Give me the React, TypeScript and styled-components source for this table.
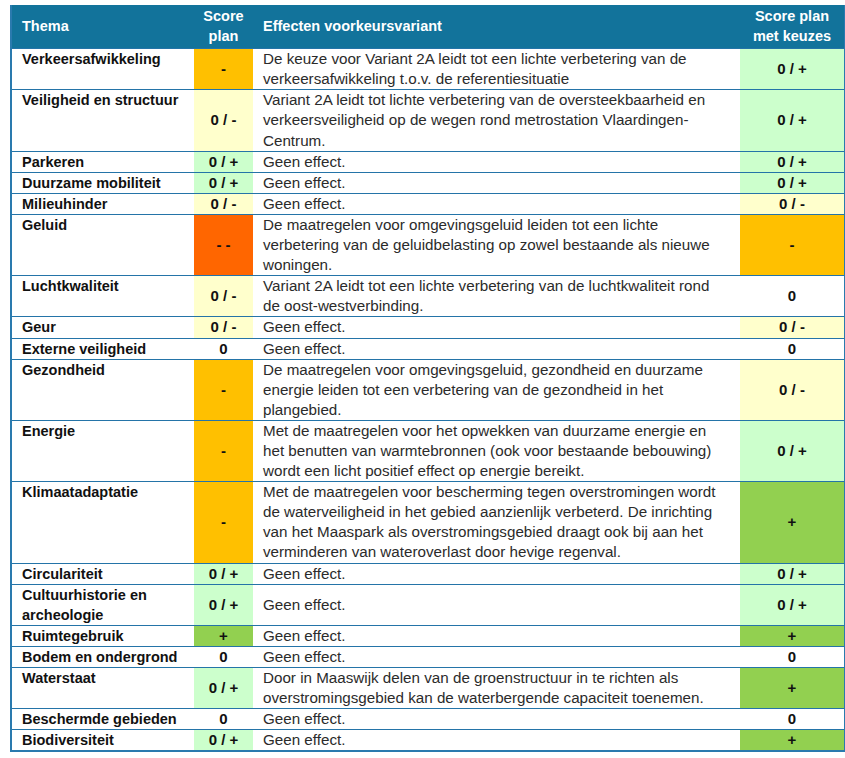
import { createGlobalStyle, styled } from 'styled-components'

const GlobalStyle = createGlobalStyle`
  body {
    margin: 0;
    background: #fff;
    font-family: 'Liberation Sans', Arial, sans-serif;
  }
`

type Score = '-' | '- -' | '0' | '0 / -' | '0 / +' | '+'

interface Row {
  thema: string[]
  plan: Score
  effect: string[]
  keuzes: Score
}

const none = ['Geen effect.']

const rows: Row[] = [
  {
    thema: ['Verkeersafwikkeling'],
    plan: '-',
    effect: ['De keuze voor Variant 2A leidt tot een lichte verbetering van de', 'verkeersafwikkeling t.o.v. de referentiesituatie'],
    keuzes: '0 / +',
  },
  {
    thema: ['Veiligheid en structuur'],
    plan: '0 / -',
    effect: [
      'Variant 2A leidt tot lichte verbetering van de oversteekbaarheid en',
      'verkeersveiligheid op de wegen rond metrostation Vlaardingen-',
      'Centrum.',
    ],
    keuzes: '0 / +',
  },
  { thema: ['Parkeren'], plan: '0 / +', effect: none, keuzes: '0 / +' },
  { thema: ['Duurzame mobiliteit'], plan: '0 / +', effect: none, keuzes: '0 / +' },
  { thema: ['Milieuhinder'], plan: '0 / -', effect: none, keuzes: '0 / -' },
  {
    thema: ['Geluid'],
    plan: '- -',
    effect: [
      'De maatregelen voor omgevingsgeluid leiden tot een lichte',
      'verbetering van de geluidbelasting op zowel bestaande als nieuwe',
      'woningen.',
    ],
    keuzes: '-',
  },
  {
    thema: ['Luchtkwaliteit'],
    plan: '0 / -',
    effect: ['Variant 2A leidt tot een lichte verbetering van de luchtkwaliteit rond', 'de oost-westverbinding.'],
    keuzes: '0',
  },
  { thema: ['Geur'], plan: '0 / -', effect: none, keuzes: '0 / -' },
  { thema: ['Externe veiligheid'], plan: '0', effect: none, keuzes: '0' },
  {
    thema: ['Gezondheid'],
    plan: '-',
    effect: [
      'De maatregelen voor omgevingsgeluid, gezondheid en duurzame',
      'energie leiden tot een verbetering van de gezondheid in het',
      'plangebied.',
    ],
    keuzes: '0 / -',
  },
  {
    thema: ['Energie'],
    plan: '-',
    effect: [
      'Met de maatregelen voor het opwekken van duurzame energie en',
      'het benutten van warmtebronnen (ook voor bestaande bebouwing)',
      'wordt een licht positief effect op energie bereikt.',
    ],
    keuzes: '0 / +',
  },
  {
    thema: ['Klimaatadaptatie'],
    plan: '-',
    effect: [
      'Met de maatregelen voor bescherming tegen overstromingen wordt',
      'de waterveiligheid in het gebied aanzienlijk verbeterd. De inrichting',
      'van het Maaspark als overstromingsgebied draagt ook bij aan het',
      'verminderen van wateroverlast door hevige regenval.',
    ],
    keuzes: '+',
  },
  { thema: ['Circulariteit'], plan: '0 / +', effect: none, keuzes: '0 / +' },
  { thema: ['Cultuurhistorie en', 'archeologie'], plan: '0 / +', effect: none, keuzes: '0 / +' },
  { thema: ['Ruimtegebruik'], plan: '+', effect: none, keuzes: '+' },
  { thema: ['Bodem en ondergrond'], plan: '0', effect: none, keuzes: '0' },
  {
    thema: ['Waterstaat'],
    plan: '0 / +',
    effect: [
      'Door in Maaswijk delen van de groenstructuur in te richten als',
      'overstromingsgebied kan de waterbergende capaciteit toenemen.',
    ],
    keuzes: '+',
  },
  { thema: ['Beschermde gebieden'], plan: '0', effect: none, keuzes: '0' },
  { thema: ['Biodiversiteit'], plan: '0 / +', effect: none, keuzes: '+' },
]

const scoreColors: Record<Score, string> = {
  '- -': '#ff6600',
  '-': '#ffc000',
  '0 / -': '#ffffcc',
  '0': '#ffffff',
  '0 / +': '#ccffcc',
  '+': '#92d050',
}

export default function App() {
  return (
    <>
      <GlobalStyle />
      <Page>
        <Table>
          <colgroup>
            <col style={{ width: 183 }} />
            <col style={{ width: 59 }} />
            <col style={{ width: 487 }} />
            <col style={{ width: 105 }} />
          </colgroup>
          <thead>
            <tr>
              <HeadCell>Thema</HeadCell>
              <HeadCell $center>
                Score
                <br />
                plan
              </HeadCell>
              <HeadCell>Effecten voorkeursvariant</HeadCell>
              <HeadCell $center>
                Score plan
                <br />
                met keuzes
              </HeadCell>
            </tr>
          </thead>
          <tbody>
            {rows.map(row => (
              <BodyRow key={row.thema.join(' ')}>
                <ThemaCell>
                  {row.thema.map(line => (
                    <Line key={line}>{line}</Line>
                  ))}
                </ThemaCell>
                <ScoreCell $score={row.plan}>{row.plan}</ScoreCell>
                <EffectCell>
                  {row.effect.map(line => (
                    <Line key={line}>{line}</Line>
                  ))}
                </EffectCell>
                <ScoreCell $score={row.keuzes}>{row.keuzes}</ScoreCell>
              </BodyRow>
            ))}
          </tbody>
        </Table>
      </Page>
    </>
  )
}

const Page = styled.div`
  padding: 5px 1px 0 10px;
`

const Table = styled.table`
  width: 834px;
  border-collapse: collapse;
  table-layout: fixed;
  border-left: 2px solid #2a7aae;
  border-right: 2px solid #2a7aae;
  border-bottom: 2px solid #2a7aae;
  font-size: 14.5px;
  line-height: 20.1px;
`

const HeadCell = styled.th<{ $center?: boolean }>`
  background: #12739b;
  color: #fff;
  font-weight: 700;
  text-align: ${p => (p.$center ? 'center' : 'left')};
  padding: 1px ${p => (p.$center ? '0' : '10px')} 2px;
  height: 40px;
  vertical-align: middle;
  white-space: nowrap;
`

const BodyRow = styled.tr`
  border-top: 1px solid #2474a8;
`

const ThemaCell = styled.td`
  padding: 0 0 0 10px;
  vertical-align: top;
  font-weight: 700;
  color: #111;
  white-space: nowrap;
`

const ScoreCell = styled.td<{ $score: Score }>`
  padding: 0;
  background: ${p => scoreColors[p.$score]};
  text-align: center;
  vertical-align: middle;
  font-weight: 700;
  font-size: 15px;
  color: #111;
  white-space: pre;
`

const EffectCell = styled.td`
  padding: 0 0 0 10px;
  vertical-align: middle;
  font-size: 15.2px;
  color: #2b2b2b;
  white-space: nowrap;
`

const Line = styled.span`
  display: block;
`
